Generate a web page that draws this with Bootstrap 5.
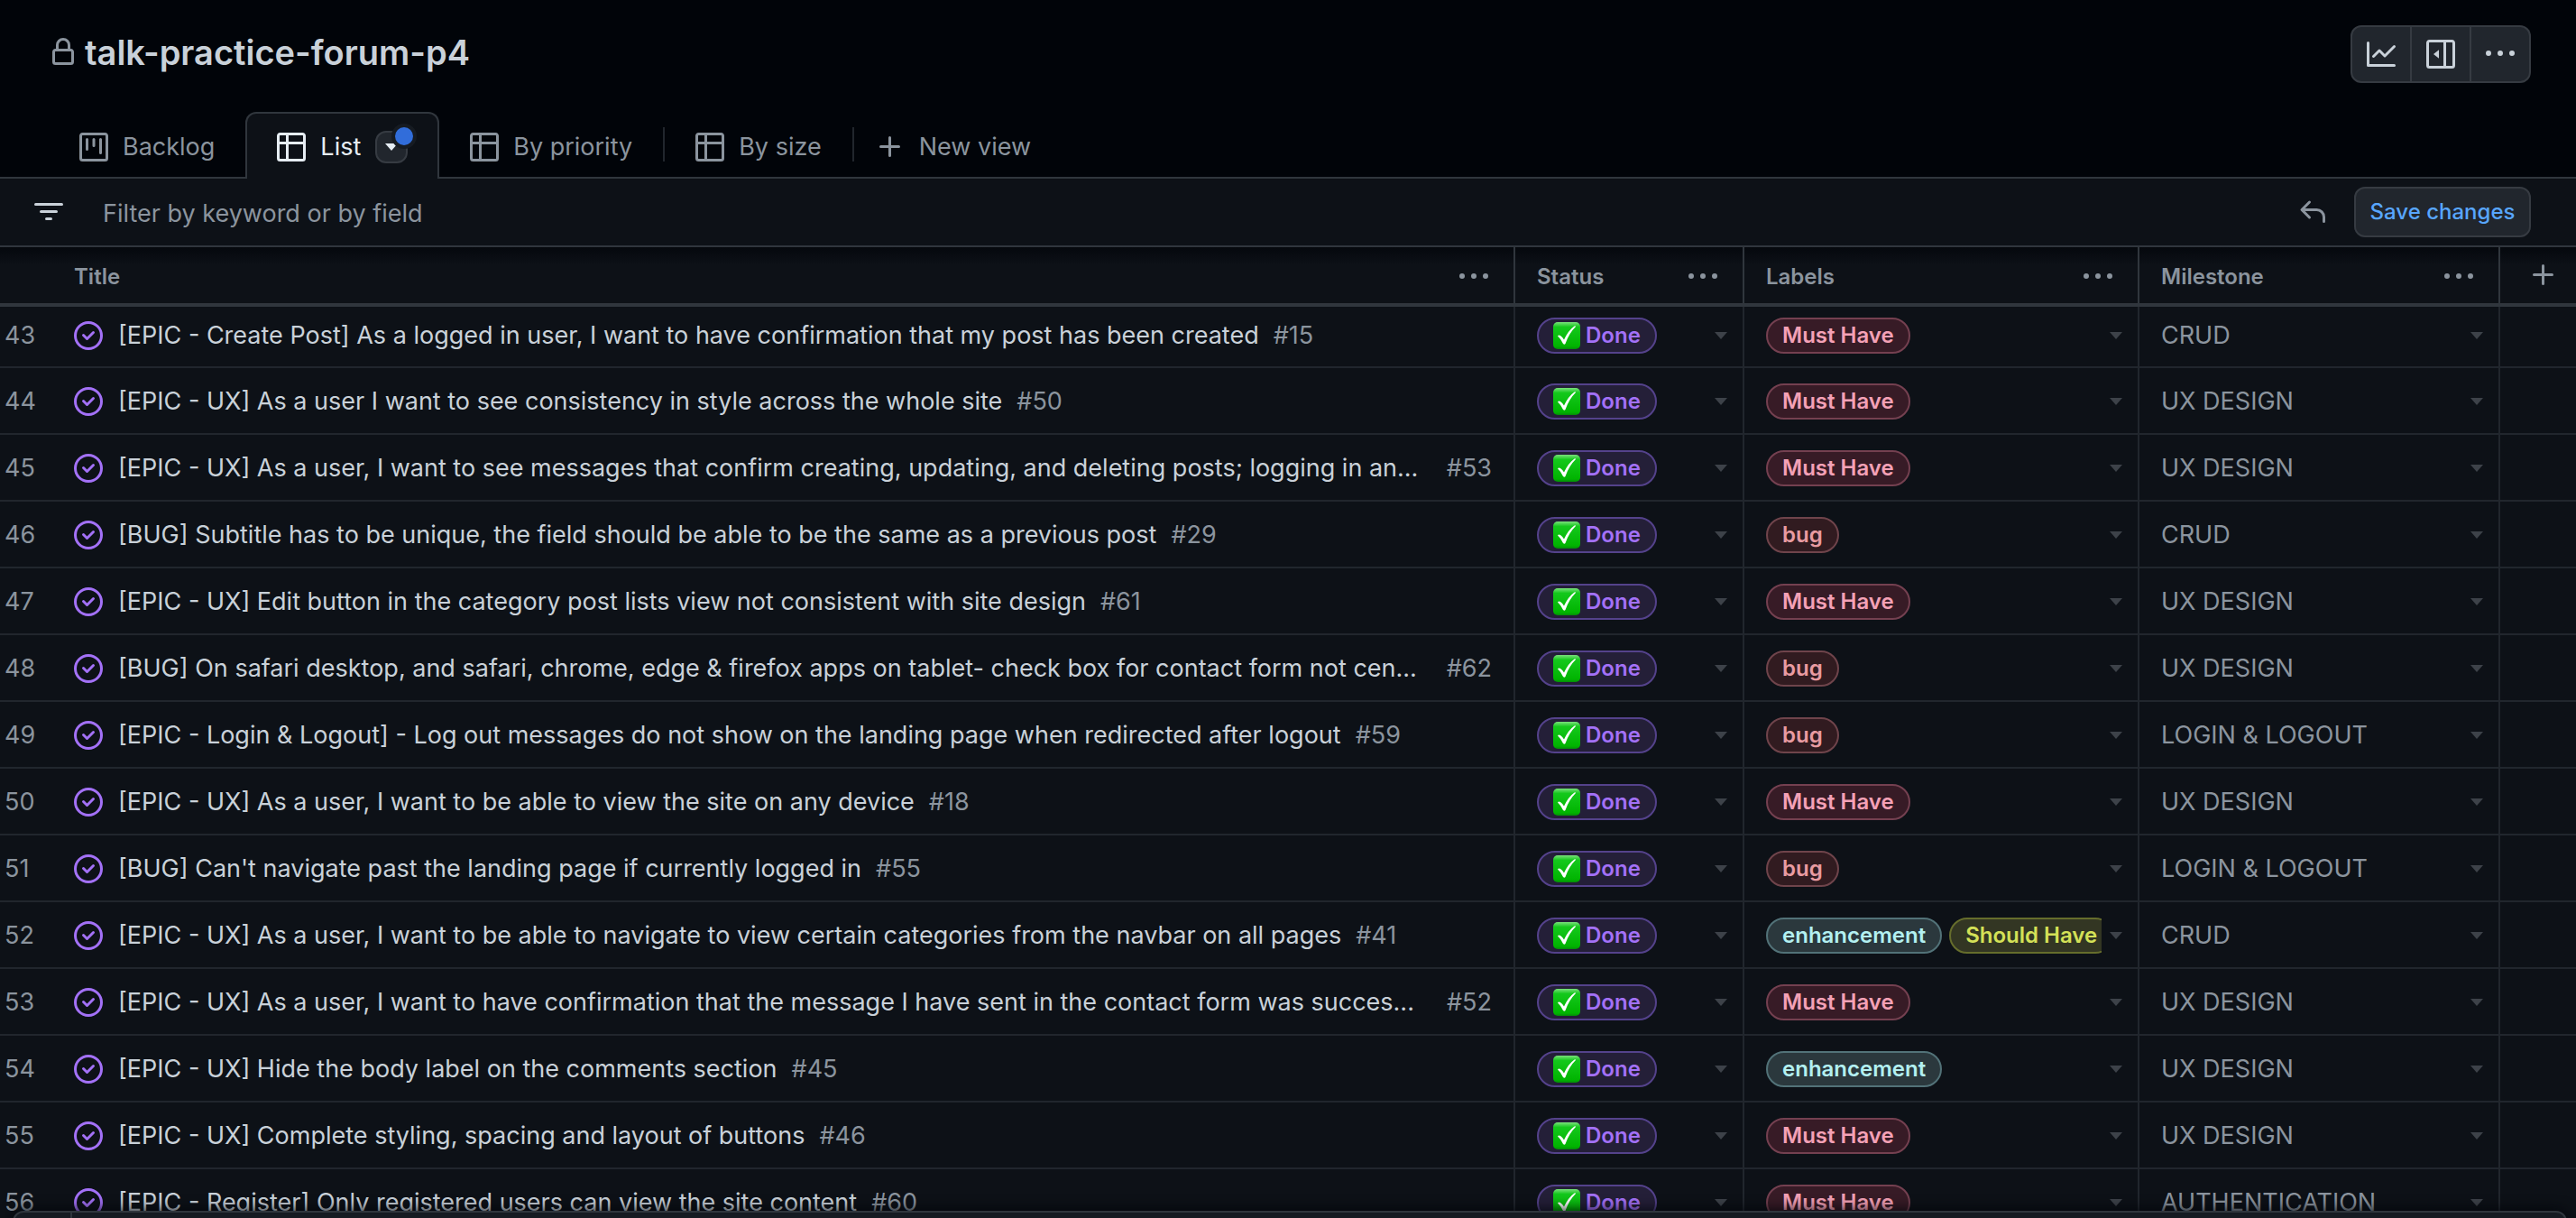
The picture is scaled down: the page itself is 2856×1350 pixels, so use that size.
<!DOCTYPE html>
<html lang="en" data-bs-theme="dark">
<head>
<meta charset="utf-8">
<meta name="viewport" content="width=device-width, initial-scale=1">
<title>talk-practice-forum-p4</title>
<link href="https://cdn.jsdelivr.net/npm/bootstrap@5.3.0/dist/css/bootstrap.min.css" rel="stylesheet">
<style>
  :root { --canvas:#0d1117; --inset:#010409; --line:#30363d; --line-soft:#21262d; --fg:#c9d1d9; --muted:#8b949e; }
  body { font-family: Inter, "Liberation Sans", sans-serif; font-size: 27px; line-height: 40px; color: var(--fg); background: var(--canvas); height: 100vh; overflow: hidden; }
  svg { display: block; flex: none; fill: currentColor; }
  button, a { color: inherit; }
  .plain { background: none; border: 0; padding: 0; display: flex; }
  .top-area { background: var(--inset); }
  .title-bar { height: 124px; padding: 28px 50px 0 54px; }
  .title-bar h1 { font-size: 38px; line-height: 60px; font-weight: 600; color: var(--fg); }
  .tool-group .btn { width: 66px; height: 64px; padding: 0; background: #21262d; border: 2px solid #363b42; border-radius: 12px; color: var(--fg); display: flex; align-items: center; justify-content: center; }
  .tool-group .btn + .btn { border-left: 0; }
  .tool-group .btn:first-child { width: 68px; }
  .view-tabs { height: 74px; padding-left: 54px; border-bottom: 2px solid var(--line); color: var(--muted); }
  .view-tabs .nav-link { color: var(--muted); height: 74px; margin-bottom: -2px; padding: 2px 32px 0; gap: 16px; display: flex; align-items: center; border: 2px solid transparent; border-bottom: 0; border-radius: 12px 12px 0 0; font-size: 27px; }
  .view-tabs .nav-link.active { background: var(--canvas); border-color: var(--line); color: #e6edf3; padding: 2px 33px 0; }
  .view-tabs .new-view { background: none; padding-left: 22px; }
  .view-menu { position: relative; width: 36px; height: 36px; background: #21262d; border: 2px solid #363b42; border-radius: 12px; padding: 0; display: flex; align-items: center; justify-content: center; }
  .unsaved-dot { position: absolute; right: -12px; top: -10px; width: 28px; height: 28px; background: #316dda; border: 4px solid #161b22; border-radius: 50%; }
  .tab-rule { width: 2px; height: 38px; background: var(--line-soft); align-self: center; }
  .filter-bar { height: 76px; padding: 0 50px 0 38px; border-bottom: 2px solid var(--line); }
  .filter-bar input { background: none; border: 0; outline: 0; color: var(--fg); padding: 4px 0 0; margin-left: 44px; }
  .filter-bar input::placeholder { color: var(--muted); opacity: 1; }
  .undo { color: var(--muted); margin-right: 30px; }
  .save-btn { height: 56px; width: 196px; padding: 0; font-size: 24px; font-weight: 500; color: #58a6ff; background: #21262d; border: 2px solid #363b42; border-radius: 12px; }
  .items { width: 100%; table-layout: fixed; border-collapse: separate; border-spacing: 0; }
  .items th { height: 66px; padding: 4px 28px 0 24px; font-size: 24px; font-weight: 600; color: var(--muted); border-right: 2px solid var(--line); border-bottom: 4px solid var(--line); background: linear-gradient(#05080d, var(--canvas) 20px); }
  .items td { height: 74px; padding: 2px 17px 0 24px; border-right: 2px solid var(--line-soft); border-bottom: 2px solid var(--line-soft); color: var(--muted); }
  .items tbody tr:first-child td { height: 68px; padding-bottom: 5px; }
  .items .c-num { border-right: 0; padding-left: 5px; padding-right: 0; }
  .items .c-title { padding-left: 0; }
  .items td.c-title { padding-right: 24px; }
  .items th.c-add { padding: 0 0 0 32px; }
  .items tr > :last-child { border-right: 0; }
  .items .c-title a { color: var(--fg); text-decoration: none; white-space: nowrap; }
  .done-ico { color: #a371f7; margin-right: 17px; }
  .pill { display: inline-flex; align-items: center; height: 40px; padding: 0 16px; border: 2px solid; border-radius: 20px; font-size: 24px; font-weight: 600; white-space: nowrap; flex: none; }
  .p-done { color: #a371f7; background: #241f38; border-color: #54428b; gap: 6px; }
  .p-must { color: #f4a1b6; background: #371b26; border-color: #744050; }
  .p-bug { color: #e99ba2; background: #311b20; border-color: #6f444b; }
  .p-enh { color: #b3f0f1; background: #2b383d; border-color: #527278; }
  .p-should { color: #d4e157; background: #333623; border-color: #666d2c; }
  .label-list { margin-right: 9px; }
  .caret { color: #3d4249; }
  .omnibar { position: fixed; left: 14px; right: 10px; bottom: -60px; height: 68px; background: #161b22; border: 2px solid var(--line); border-radius: 12px; box-shadow: 0 0 16px #010409; }
  .omnibar .add-cell { width: 64px; border-right: 2px solid var(--line); }
</style>
<script src="https://cdn.jsdelivr.net/npm/bootstrap@5.3.0/dist/js/bootstrap.bundle.min.js"></script>
</head>
<body>
<svg class="position-absolute" width="0" height="0" aria-hidden="true">
  <defs><linearGradient id="eg" x1="0" y1="0" x2="0" y2="1"><stop offset="0" stop-color="#7be07c"/><stop offset=".18" stop-color="#14c81c"/><stop offset=".9" stop-color="#00b400"/><stop offset="1" stop-color="#058a0a"/></linearGradient></defs>
  <symbol id="i-table" viewBox="0 0 16 16"><path d="M0 1.75C0 .784.784 0 1.75 0h12.5C15.216 0 16 .784 16 1.75v12.5A1.75 1.75 0 0 1 14.25 16H1.75A1.75 1.75 0 0 1 0 14.25ZM6.5 6.5v8h7.75a.25.25 0 0 0 .25-.25V6.5Zm8-1.5V1.75a.25.25 0 0 0-.25-.25H6.5V5Zm-13 1.5v7.75c0 .138.112.25.25.25H5v-8ZM5 5V1.5H1.75a.25.25 0 0 0-.25.25V5Z"/></symbol>
  <symbol id="i-board" viewBox="0 0 16 16"><path d="M1.75 0h12.5C15.216 0 16 .784 16 1.75v12.5A1.75 1.75 0 0 1 14.25 16H1.75A1.75 1.75 0 0 1 0 14.25V1.75C0 .784.784 0 1.75 0ZM1.5 1.75v12.5c0 .138.112.25.25.25h12.5a.25.25 0 0 0 .25-.25V1.75a.25.25 0 0 0-.25-.25H1.75a.25.25 0 0 0-.25.25ZM11.75 3a.75.75 0 0 1 .75.75v7.5a.75.75 0 0 1-1.5 0v-7.5a.75.75 0 0 1 .75-.75Zm-8.25.75a.75.75 0 0 1 1.5 0v5.5a.75.75 0 0 1-1.5 0ZM8 3a.75.75 0 0 1 .75.75v3.5a.75.75 0 0 1-1.5 0v-3.5A.75.75 0 0 1 8 3Z"/></symbol>
  <symbol id="i-dots" viewBox="0 0 16 16"><path d="M8 9a1.5 1.5 0 1 0 0-3 1.5 1.5 0 0 0 0 3ZM1.5 9a1.5 1.5 0 1 0 0-3 1.5 1.5 0 0 0 0 3Zm13 0a1.5 1.5 0 1 0 0-3 1.5 1.5 0 0 0 0 3Z"/></symbol>
  <symbol id="i-plus" viewBox="0 0 16 16"><path d="M7.75 2a.75.75 0 0 1 .75.75V7h4.25a.75.75 0 0 1 0 1.5H8.5v4.25a.75.75 0 0 1-1.5 0V8.5H2.75a.75.75 0 0 1 0-1.5H7V2.75A.75.75 0 0 1 7.75 2Z"/></symbol>
  <symbol id="i-done" viewBox="0 0 16 16"><path d="M11.28 6.78a.75.75 0 0 0-1.06-1.06L7.25 8.69 5.78 7.22a.75.75 0 0 0-1.06 1.06l2 2a.75.75 0 0 0 1.06 0l3.5-3.5Z"/><path d="M16 8A8 8 0 1 1 0 8a8 8 0 0 1 16 0Zm-1.5 0a6.5 6.5 0 1 0-13 0 6.5 6.5 0 0 0 13 0Z"/></symbol>
  <symbol id="i-caret" viewBox="0 0 14 8"><path d="M0 0h14L7 8Z"/></symbol>
  <symbol id="i-emoji" viewBox="0 0 30 30"><rect width="30" height="30" rx="5" fill="url(#eg)"/><path d="M5 15.500q1-1.500 3-.5 2.500 1.500 4 4.500Q17 9 23.500 4.500q1.500-.5 1.500.6Q17.500 12.500 13.500 24q-1 1.500-2.500 0Q8.500 18.500 5 15.500Z" fill="#fff"/></symbol>
</svg>

<div class="d-flex flex-column h-100">
  <header class="top-area flex-shrink-0">
    <div class="title-bar d-flex align-items-start justify-content-between">
      <div class="d-flex align-items-center">
        <svg width="32" height="32" viewBox="0 0 16 16" color="#8b949e"><path d="M4 4a4 4 0 0 1 8 0v2h.25c.966 0 1.750.784 1.750 1.750v5.500A1.750 1.750 0 0 1 12.250 15h-8.500A1.750 1.750 0 0 1 2 13.250v-5.500C2 6.784 2.784 6 3.750 6H4Zm8.250 3.500h-8.500a.25.25 0 0 0-.25.25v5.500c0 .138.112.25.25.25h8.500a.25.25 0 0 0 .25-.25v-5.500a.25.25 0 0 0-.25-.25ZM10.500 6V4a2.500 2.500 0 1 0-5 0v2Z"/></svg>
        <h1 class="m-0 ms-2">talk-practice-forum-p4</h1>
      </div>
      <div class="btn-group tool-group" role="group" aria-label="Project tools">
        <button class="btn" type="button" aria-label="Insights"><svg width="32" height="32" viewBox="0 0 16 16"><path d="M1.500 1.750V13.500h13.750a.75.75 0 0 1 0 1.500H.75a.75.75 0 0 1-.75-.75V1.750a.75.75 0 0 1 1.500 0Zm14.280 2.530-5.250 5.250a.75.75 0 0 1-1.060 0L7 7.060 4.280 9.780a.751.751 0 0 1-1.060-1.060l3.250-3.250a.75.75 0 0 1 1.060 0L10 7.940l4.720-4.720a.751.751 0 0 1 1.060 1.060Z"/></svg></button>
        <button class="btn ms-0" type="button" aria-label="Details"><svg width="32" height="32" viewBox="0 0 16 16"><path d="M7 10.400V5.600L4 8Z"/><path d="M1.750 0h12.500C15.216 0 16 .784 16 1.750v12.500A1.750 1.750 0 0 1 14.250 16H1.750A1.750 1.750 0 0 1 0 14.250V1.750C0 .784.784 0 1.750 0ZM1.500 1.750v12.500c0 .138.112.25.25.25H9.500v-13H1.750a.25.25 0 0 0-.25.25ZM11 14.500h3.250a.25.25 0 0 0 .25-.25V1.750a.25.25 0 0 0-.25-.25H11Z"/></svg></button>
        <button class="btn ms-0" type="button" aria-label="More"><svg width="32" height="32"><use href="#i-dots"/></svg></button>
      </div>
    </div>
    <nav class="view-tabs nav flex-nowrap align-items-end" aria-label="Views">
      <a class="nav-link" href="#"><svg width="32" height="32"><use href="#i-board"/></svg>Backlog</a>
      <div class="nav-link active"><svg width="32" height="32"><use href="#i-table"/></svg>List<button class="view-menu" type="button" aria-label="View options"><svg width="14" height="8"><use href="#i-caret"/></svg><span class="unsaved-dot"></span></button></div>
      <a class="nav-link" href="#"><svg width="32" height="32"><use href="#i-table"/></svg>By priority</a>
      <span class="tab-rule"></span>
      <a class="nav-link" href="#"><svg width="32" height="32"><use href="#i-table"/></svg>By size</a>
      <span class="tab-rule"></span>
      <button class="nav-link new-view" type="button"><svg width="32" height="32"><use href="#i-plus"/></svg>New view</button>
    </nav>
  </header>

  <div class="filter-bar d-flex align-items-center flex-shrink-0">
    <svg width="32" height="32" viewBox="0 0 16 16"><path d="M.75 3h14.500a.75.75 0 0 1 0 1.500H.75a.75.75 0 0 1 0-1.500ZM3 7.750A.75.75 0 0 1 3.750 7h8.500a.75.75 0 0 1 0 1.500h-8.500A.75.75 0 0 1 3 7.750Zm3 4a.75.75 0 0 1 .75-.75h2.500a.75.75 0 0 1 0 1.500h-2.500a.75.75 0 0 1-.75-.75Z"/></svg>
    <input class="flex-grow-1" type="text" aria-label="Filter" placeholder="Filter by keyword or by field">
    <button class="plain undo" type="button" aria-label="Discard changes"><svg width="32" height="32" viewBox="0 0 16 16"><path d="M6.780 1.970a.75.75 0 0 1 0 1.060L3.810 6h6.440A4.750 4.750 0 0 1 15 10.750v2.500a.75.75 0 0 1-1.500 0v-2.500a3.250 3.250 0 0 0-3.250-3.250H3.810l2.970 2.970a.749.749 0 0 1-1.060 1.060L1.470 7.280a.75.75 0 0 1 0-1.060l4.250-4.250a.75.75 0 0 1 1.060 0Z"/></svg></button>
    <button class="btn save-btn" type="button">Save changes</button>
  </div>

  <main class="flex-grow-1 overflow-hidden">
    <table class="items">
      <colgroup><col style="width:82px"><col><col style="width:254px"><col style="width:438px"><col style="width:400px"><col style="width:84px"></colgroup>
      <thead><tr id="head"></tr></thead>
      <tbody id="rows"></tbody>
    </table>
  </main>
</div>
<div class="omnibar"><div class="add-cell h-100"></div></div>

<script>
  const icon = (n, w, h, c = '') => `<svg class="${c}" width="${w}" height="${h}"><use href="#i-${n}"/></svg>`;
  const items = [
    [43, '[EPIC - Create Post] As a logged in user, I want to have confirmation that my post has been created', 15, 'm', 'CRUD'],
    [44, '[EPIC - UX] As a user I want to see consistency in style across the whole site', 50, 'm', 'UX DESIGN'],
    [45, '[EPIC - UX] As a user, I want to see messages that confirm creating, updating, and deleting posts; logging in an...', 53, 'm', 'UX DESIGN'],
    [46, '[BUG] Subtitle has to be unique, the field should be able to be the same as a previous post', 29, 'b', 'CRUD'],
    [47, '[EPIC - UX] Edit button in the category post lists view not consistent with site design', 61, 'm', 'UX DESIGN'],
    [48, '[BUG] On safari desktop, and safari, chrome, edge & firefox apps on tablet- check box for contact form not cen...', 62, 'b', 'UX DESIGN'],
    [49, '[EPIC - Login & Logout] - Log out messages do not show on the landing page when redirected after logout', 59, 'b', 'LOGIN & LOGOUT'],
    [50, '[EPIC - UX] As a user, I want to be able to view the site on any device', 18, 'm', 'UX DESIGN'],
    [51, "[BUG] Can't navigate past the landing page if currently logged in", 55, 'b', 'LOGIN & LOGOUT'],
    [52, '[EPIC - UX] As a user, I want to be able to navigate to view certain categories from the navbar on all pages', 41, 'es', 'CRUD'],
    [53, '[EPIC - UX] As a user, I want to have confirmation that the message I have sent in the contact form was succes...', 52, 'm', 'UX DESIGN'],
    [54, '[EPIC - UX] Hide the body label on the comments section', 45, 'e', 'UX DESIGN'],
    [55, '[EPIC - UX] Complete styling, spacing and layout of buttons', 46, 'm', 'UX DESIGN'],
    [56, '[EPIC - Register] Only registered users can view the site content', 60, 'm', 'AUTHENTICATION']
  ];
  const labels = { m: ['must', 'Must Have'], b: ['bug', 'bug'], e: ['enh', 'enhancement'], s: ['should', 'Should Have'] };
  const drop = name => `<button class="plain ms-auto flex-shrink-0 caret" type="button" aria-label="${name}">${icon('caret', 14, 8)}</button>`;
  document.getElementById('head').innerHTML = '<th class="c-num"></th>' +
    ['Title', 'Status', 'Labels', 'Milestone'].map((t, i) => `<th class="${i ? '' : 'c-title'}"><div class="d-flex align-items-center justify-content-between">${t}<button class="plain" type="button" aria-label="${t} options">${icon('dots', 32, 32)}</button></div></th>`).join('') +
    `<th class="c-add"><button class="plain" type="button" aria-label="Add field">${icon('plus', 32, 32)}</button></th>`;
  document.getElementById('rows').innerHTML = items.map(([n, t, id, l, m]) => `<tr>
    <td class="c-num">${n}</td>
    <td class="c-title"><div class="d-flex align-items-center">${icon('done', 32, 32, 'done-ico')}<a href="#">${t.replace('&', '&amp;')}</a><span class="${t.endsWith('...') ? 'ms-auto' : 'ms-3'}">#${id}</span></div></td>
    <td><div class="d-flex align-items-center"><span class="pill p-done">${icon('emoji', 30, 30)}Done</span>${drop('Status')}</div></td>
    <td><div class="d-flex align-items-center"><div class="label-list d-flex gap-2 overflow-hidden flex-grow-1">${[...l].map(k => `<span class="pill p-${labels[k][0]}">${labels[k][1]}</span>`).join('')}</div>${drop('Labels')}</div></td>
    <td><div class="d-flex align-items-center">${m.replace('&', '&amp;')}${drop('Milestone')}</div></td>
    <td></td></tr>`).join('');
</script>
</body>
</html>
